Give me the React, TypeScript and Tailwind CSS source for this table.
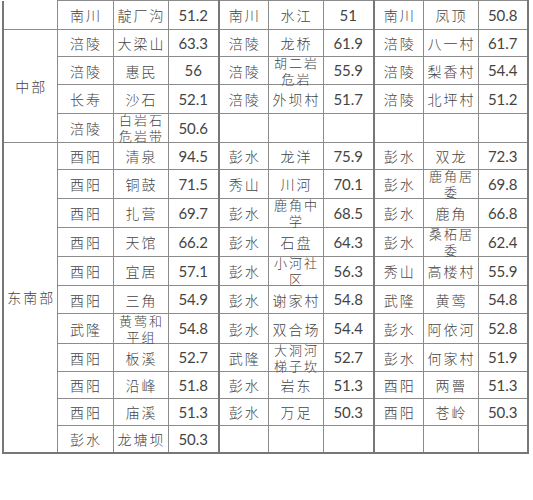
import * as React from 'react'

type Cell = [string, string, string] | null

interface Row {
  h: string
  region?: { label: string; span: number }
  cells: Cell[]
}

const rows: Row[] = [
  { h: 'h-[29px]', cells: [['南川', '靛厂沟', '51.2'], ['南川', '水江', '51'], ['南川', '凤顶', '50.8']] },
  {
    h: 'h-[27px]',
    region: { label: '中部', span: 4 },
    cells: [['涪陵', '大梁山', '63.3'], ['涪陵', '龙桥', '61.9'], ['涪陵', '八一村', '61.7']],
  },
  { h: 'h-[28px]', cells: [['涪陵', '惠民', '56'], ['涪陵', '胡二岩|危岩', '55.9'], ['涪陵', '梨香村', '54.4']] },
  { h: 'h-[29px]', cells: [['长寿', '沙石', '52.1'], ['涪陵', '外坝村', '51.7'], ['涪陵', '北坪村', '51.2']] },
  { h: 'h-[29px]', cells: [['涪陵', '白岩石|危岩带', '50.6'], null, null] },
  {
    h: 'h-[27px]',
    region: { label: '东南部', span: 11 },
    cells: [['酉阳', '清泉', '94.5'], ['彭水', '龙洋', '75.9'], ['彭水', '双龙', '72.3']],
  },
  { h: 'h-[29px]', cells: [['酉阳', '铜鼓', '71.5'], ['秀山', '川河', '70.1'], ['彭水', '鹿角居|委', '69.8']] },
  { h: 'h-[29px]', cells: [['酉阳', '扎营', '69.7'], ['彭水', '鹿角中|学', '68.5'], ['彭水', '鹿角', '66.8']] },
  { h: 'h-[29px]', cells: [['酉阳', '天馆', '66.2'], ['彭水', '石盘', '64.3'], ['彭水', '桑柘居|委', '62.4']] },
  { h: 'h-[29px]', cells: [['酉阳', '宜居', '57.1'], ['彭水', '小河社|区', '56.3'], ['秀山', '高楼村', '55.9']] },
  { h: 'h-[28px]', cells: [['酉阳', '三角', '54.9'], ['彭水', '谢家村', '54.8'], ['武隆', '黄莺', '54.8']] },
  { h: 'h-[30px]', cells: [['武隆', '黄莺和|平组', '54.8'], ['彭水', '双合场', '54.4'], ['彭水', '阿依河', '52.8']] },
  { h: 'h-[28px]', cells: [['酉阳', '板溪', '52.7'], ['武隆', '大洞河|梯子坎', '52.7'], ['彭水', '何家村', '51.9']] },
  { h: 'h-[27px]', cells: [['酉阳', '沿峰', '51.8'], ['彭水', '岩东', '51.3'], ['酉阳', '两罾', '51.3']] },
  { h: 'h-[27px]', cells: [['酉阳', '庙溪', '51.3'], ['彭水', '万足', '50.3'], ['酉阳', '苍岭', '50.3']] },
  { h: 'h-[27px]', cells: [['彭水', '龙塘坝', '50.3'], null, null] },
]

const cjk = "font-['Noto_Sans_CJK_SC',sans-serif] font-light tracking-[2px] pl-[2px] text-[14px] leading-[16px]"
const num = "font-['Lato',sans-serif] text-[15px]"
const td = 'border border-[#8c8c8c] p-0 text-center align-middle text-[#444]'

function Place({ text }: { text: string }) {
  const lines = text.split('|')
  if (lines.length === 1) return <>{text}</>
  return (
    <div className="flex h-[22px] flex-col justify-center text-[13px] leading-[16px]">
      {lines.map((l, i) => (
        <div key={i}>{l}</div>
      ))}
    </div>
  )
}

function Group({ cell, first }: { cell: Cell; first: boolean }) {
  const sep = first ? '' : 'border-l-2 border-l-[#777]'
  if (!cell)
    return (
      <>
        <td className={`${td} ${sep}`} />
        <td className={td} />
        <td className={td} />
      </>
    )
  return (
    <>
      <td className={`${td} ${sep} ${cjk}`}>{cell[0]}</td>
      <td className={`${td} ${cjk}`}>
        <Place text={cell[1]} />
      </td>
      <td className={`${td} ${num}`}>{cell[2]}</td>
    </>
  )
}

export default function App() {
  const widths = ['w-[54px]', 'w-[56px]', 'w-[55px]', 'w-[51px]', 'w-[49px]', 'w-[55px]', 'w-[51px]', 'w-[49px]', 'w-[55px]', 'w-[50px]']
  return (
    <div className="h-[500px] w-[533px] bg-white pl-[2px]">
      <table className="table-fixed border-collapse border-2 border-t-0 border-[#777] w-[526px]">
        <colgroup>
          {widths.map((w, i) => (
            <col key={i} className={w} />
          ))}
        </colgroup>
        <tbody>
          {rows.map((r, i) => (
            <tr key={i} className={r.h}>
              {i === 0 && <td className={`${td} border-t-0`} />}
              {r.region && (
                <td rowSpan={r.region.span} className={`${td} ${cjk}`}>
                  {r.region.label}
                </td>
              )}
              {r.cells.map((c, j) => (
                <Group key={j} cell={c} first={j === 0} />
              ))}
            </tr>
          ))}
        </tbody>
      </table>
    </div>
  )
}
